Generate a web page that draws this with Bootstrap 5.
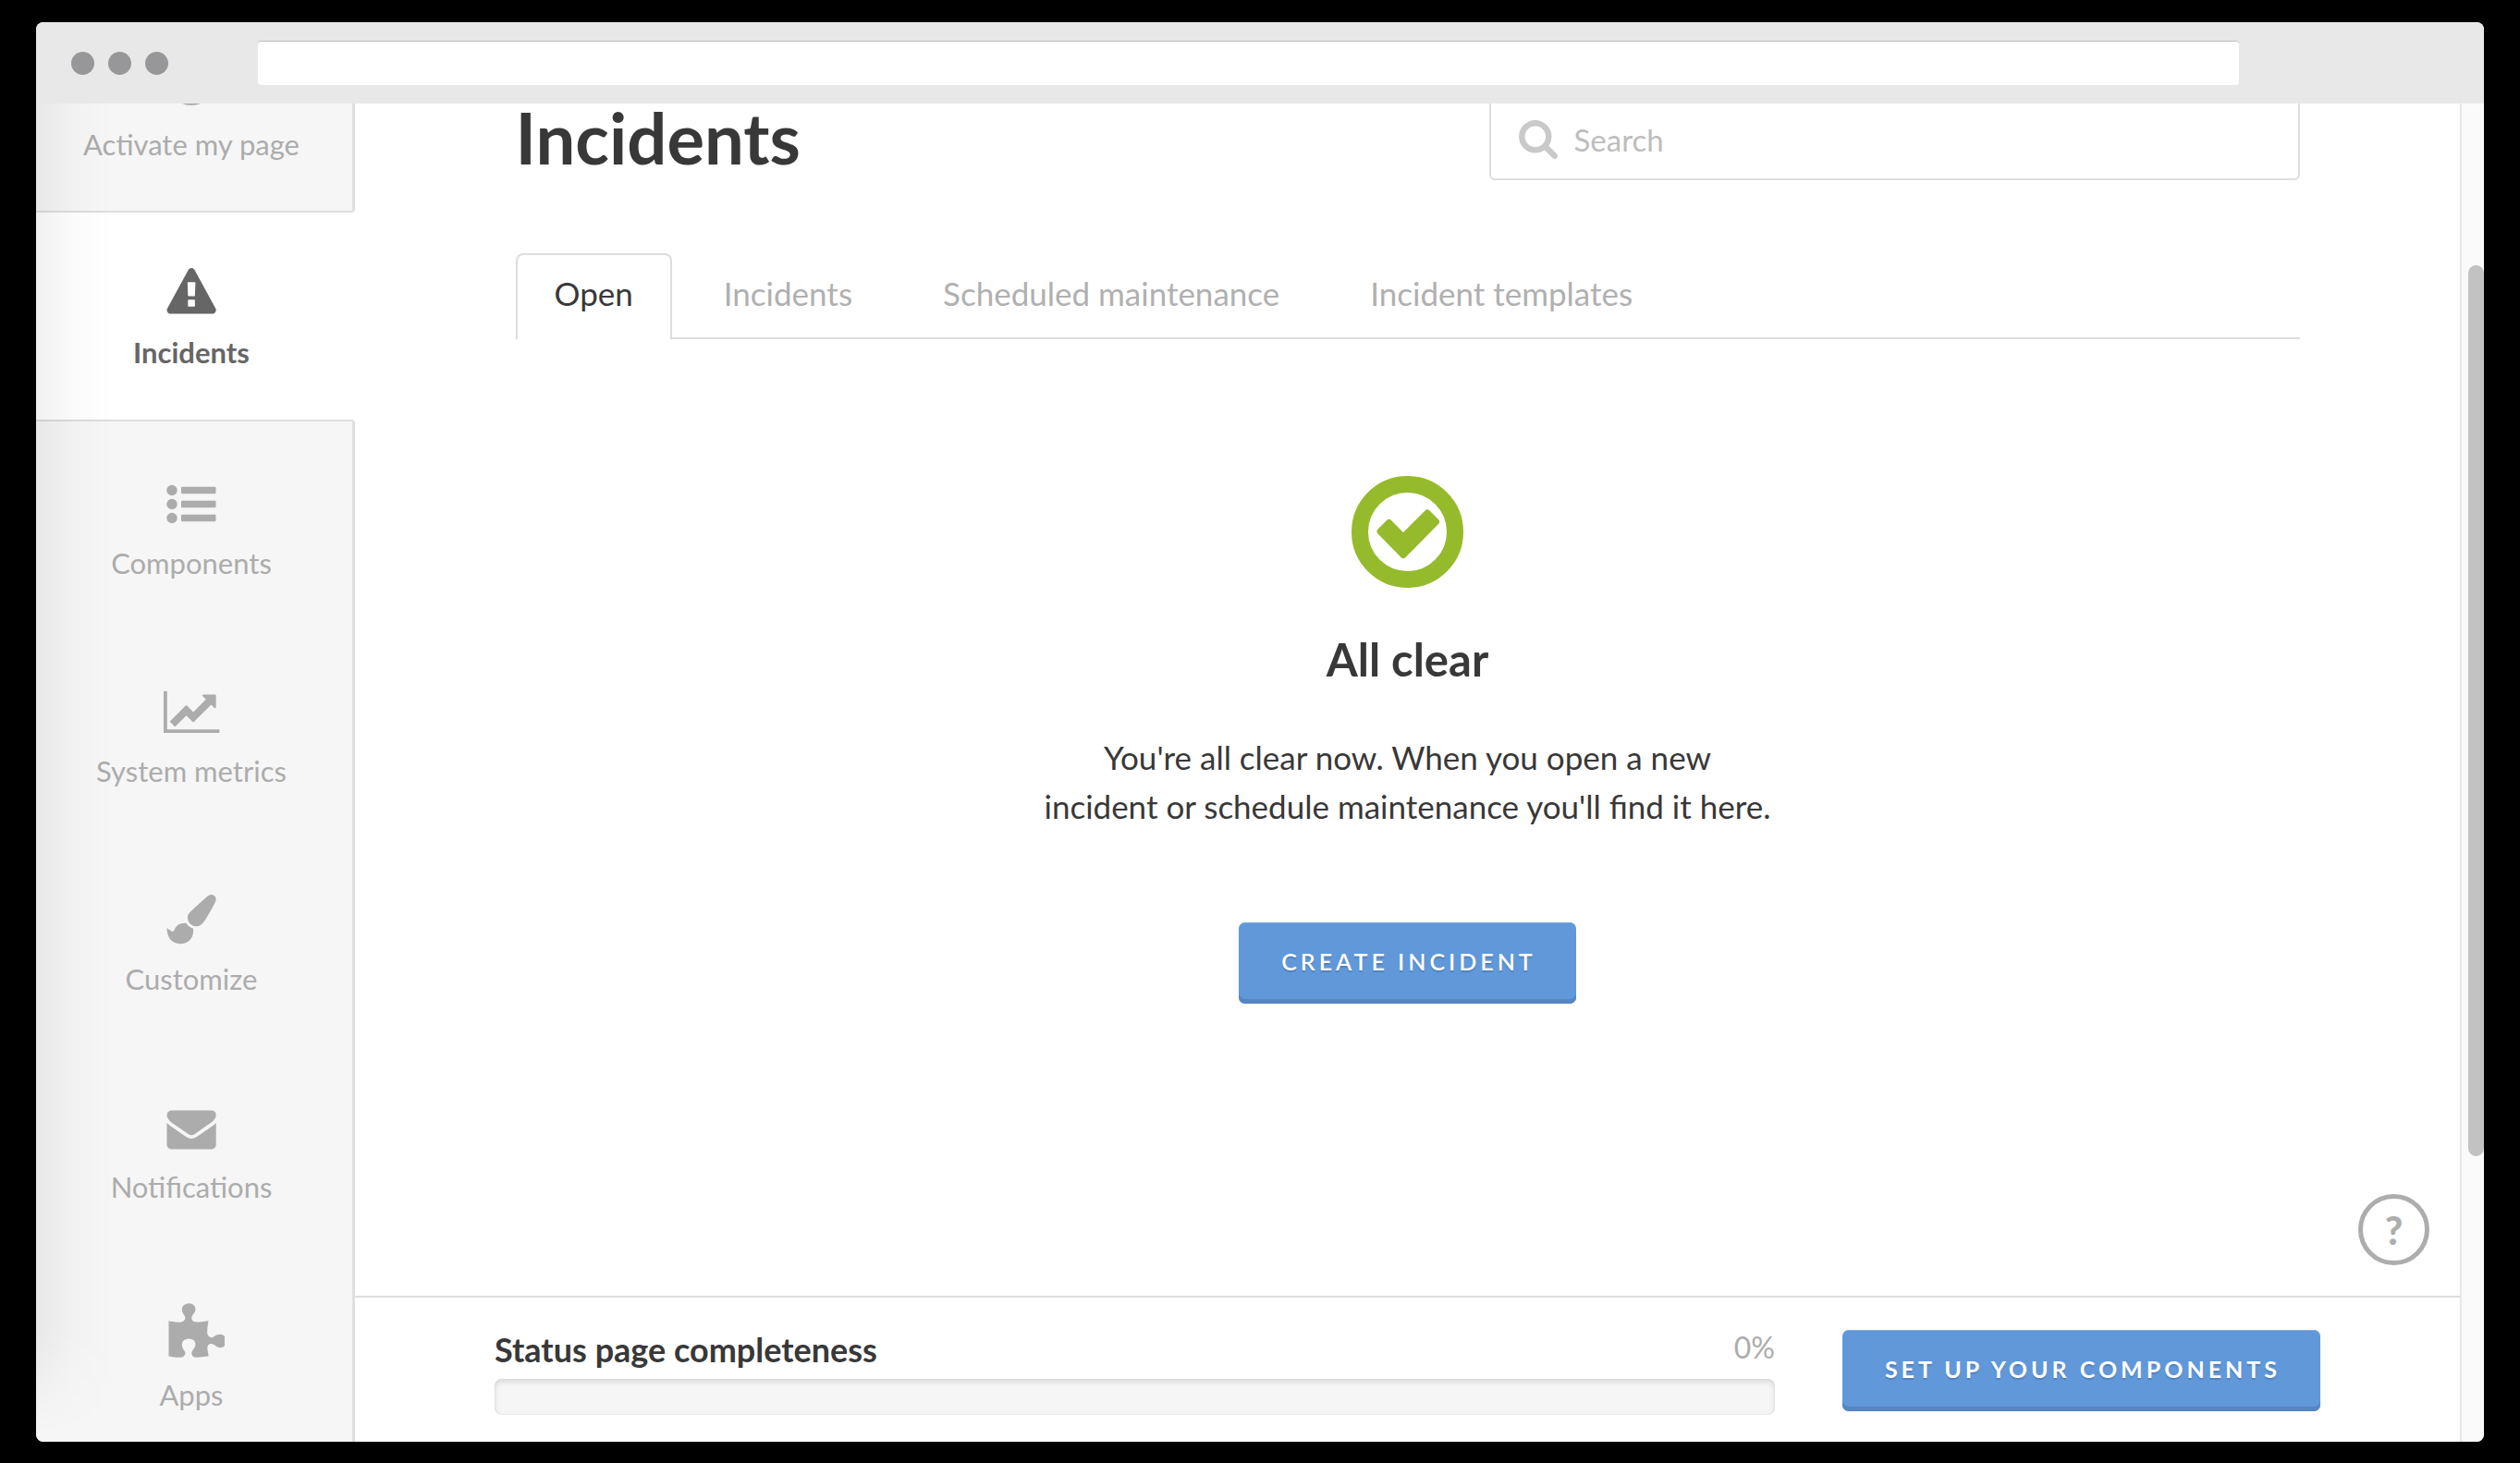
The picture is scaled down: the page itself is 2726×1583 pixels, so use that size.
<!DOCTYPE html>
<html lang="en">
<head>
<meta charset="utf-8">
<meta name="viewport" content="width=device-width, initial-scale=1">
<title>Incidents</title>
<link href="https://cdn.jsdelivr.net/npm/bootstrap@5.3.0/dist/css/bootstrap.min.css" rel="stylesheet">
<style>
body{background:#000;color:#383838;font-family:Lato,"Open Sans",sans-serif;font-size:35px;line-height:52px}
.shell{height:100vh;padding:24px 39px 23px}
.window{background:#fff;border-radius:8px}
.titlebar{background:#e8e8e8;height:88px;padding-left:38px;padding-right:265px}
.dots{gap:15px;margin-right:97px}
.dot{width:25px;height:25px;background:#979799}
.address{height:48px;border:0;border-top:1px solid #bdbdbd;border-radius:4px;background:#fff;padding:0 16px;font-size:24px;outline-offset:-2px}
.sidebar{width:345px;background:#f6f6f6;min-height:0}
.sidebar::after{content:"";position:absolute;top:0;bottom:0;left:0;width:84px;pointer-events:none;background:linear-gradient(to right,rgba(0,0,0,.055),rgba(0,0,0,.015) 50%,rgba(0,0,0,0));-webkit-mask-image:linear-gradient(to top,transparent 10px,#000 120px);mask-image:linear-gradient(to top,transparent 10px,#000 120px)}
.side-nav{margin-top:-109px}
.side-link{height:225px;padding:47px 6px 0 0;border-right:3px solid #e0e0e0;color:#acacac;font-size:31px;line-height:36px;gap:10px;text-decoration:none}
.side-link:hover{color:#888}
.side-link svg{width:72px;height:78px;flex:none}
.side-link.current{height:228px;background:#fff;border-right-color:#fff;border-top:2px solid #ddd;border-bottom:2px solid #ddd;padding-top:45px;color:#666;font-weight:700}
.scrolled{margin-top:-5px}
.content-width{max-width:1930px}
.page-title{font-size:76px;line-height:72px;font-weight:700}
.search-box{width:877px;height:88px;border:2px solid #ddd;border-radius:6px;padding:0 32px 0 30px;gap:18px;color:#c9c9c9}
.search-box svg{width:42px;height:42px;flex:none}
.search-box input{border:0;font-size:33px;background:none;outline:0;padding:0;color:#383838}
.search-box input::placeholder{color:#bdbdbd;opacity:1}
.page-tabs{margin-top:79px;gap:14px;border-bottom:2px solid #ddd}
.page-tabs .nav-link{border:2px solid transparent;border-bottom:0;border-radius:8px 8px 0 0;padding:16px 40px 25px;line-height:50px;color:#b0b0b0;margin-bottom:-2px}
.page-tabs .nav-link.active{border-color:#ddd;color:#383838;background:#fff}
.empty-state{padding-top:148px}
.empty-state svg{width:121px;height:121px}
.empty-title{font-size:49px;line-height:58px;font-weight:700;margin:48px 0 51px}
.empty-text{line-height:53px;margin-bottom:99px}
.btn-action{--bs-btn-color:#fff;--bs-btn-bg:#6098d9;--bs-btn-hover-color:#fff;--bs-btn-hover-bg:#5790d3;--bs-btn-active-color:#fff;--bs-btn-active-bg:#5585c2;--bs-btn-border-width:0;height:88px;padding:0 43px 4px 46px;border-radius:7px;box-shadow:inset 0 -5px 0 #5585c2,inset 0 1px 0 #7fade2;font-size:25px;line-height:40px;font-weight:600;letter-spacing:4px;text-shadow:0 2px 1px rgba(0,0,0,.15);text-transform:uppercase}
.help{right:33px;bottom:33px;width:77px;height:77px;border:5px solid #adadad;background:#fff;color:#adadad;font-size:42px;line-height:60px;font-weight:900}
.setup-bar{height:158px;border-top:2px solid #ddd}
.setup-width{max-width:1975px;gap:73px;padding-top:2px}
.setup-label{font-size:36px;font-weight:700;line-height:48px}
.setup-value{color:#acacac;font-size:32px;line-height:44px}
.meter{--bs-progress-height:39px;--bs-progress-bg:#f6f6f6;--bs-progress-border-radius:8px;box-shadow:inset 0 3px 6px rgba(0,0,0,.12),inset 0 0 2px rgba(0,0,0,.1);margin-top:8px}
.track{width:26px;background:#fafafa;border-left:2px solid #e8e8e8;padding-top:175px}
.thumb{width:17px;height:75.7%;border-radius:9px;background:#c2c2c2}
</style>
</head>
<body>
<div class="shell d-flex">
<div class="window d-flex flex-column flex-grow-1 overflow-hidden">
  <header class="titlebar d-flex align-items-center flex-shrink-0">
    <div class="dots d-flex"><span class="dot rounded-circle"></span><span class="dot rounded-circle"></span><span class="dot rounded-circle"></span></div>
    <input class="address flex-grow-1" type="text" aria-label="Address">
  </header>
  <div class="d-flex flex-grow-1 overflow-hidden">
    <aside class="sidebar position-relative flex-shrink-0 overflow-hidden">
      <nav class="side-nav d-flex flex-column" aria-label="Main">
        <a href="#" class="side-link d-flex flex-column align-items-center">
          <svg viewBox="0 0 72 78"><circle cx="36" cy="38" r="22" fill="none" stroke="currentColor" stroke-width="8"/></svg>
          <span>Activate my page</span></a>
        <a href="#" class="side-link current d-flex flex-column align-items-center" aria-current="page">
          <svg viewBox="0 0 72 78" fill="currentColor"><g transform="translate(9.5 15) scale(.0297)"><path d="M1024 1375v-190q0-14-9.500-23.500t-22.500-9.500h-192q-13 0-22.500 9.500t-9.500 23.500v190q0 14 9.500 23.500t22.500 9.500h192q13 0 22.500-9.500t9.500-23.500zm-2-374l18-459q0-12-10-19-13-11-24-11h-220q-11 0-24 11-10 7-10 21l17 457q0 10 10 16.500t24 6.500h185q14 0 23.500-6.500t10.500-16.500zm-14-934l768 1408q35 63-2 126-17 29-46.500 46t-63.500 17h-1536q-34 0-63.500-17t-46.500-46q-37-63-2-126l768-1408q17-31 47-49t65-18 65 18 47 49z"/></g></svg>
          <span>Incidents</span></a>
        <a href="#" class="side-link d-flex flex-column align-items-center">
          <svg viewBox="0 0 72 78" fill="currentColor"><circle cx="15" cy="27.500" r="5.700"/><circle cx="15" cy="42.500" r="5.700"/><circle cx="15" cy="57.500" r="5.700"/><rect x="25" y="23.700" width="37.500" height="7.600" rx="1"/><rect x="25" y="38.700" width="37.500" height="7.600" rx="1"/><rect x="25" y="53.700" width="37.500" height="7.600" rx="1"/></svg>
          <span>Components</span></a>
        <a href="#" class="side-link d-flex flex-column align-items-center">
          <svg viewBox="0 0 72 78" fill="currentColor"><g transform="translate(6 16) scale(.0295)"><path d="M2048 1536v128h-2048v-1536h128v1408h1920zm-128-1248v435q0 21-19.500 29.500t-35.500-7.500l-121-121-633 633q-10 10-23 10t-23-10l-233-233-416 416-192-192 585-585q10-10 23-10t23 10l233 233 464-464-121-121q-16-16-7.500-35.500t29.500-19.500h435q14 0 23 9t9 23z"/></g></svg>
          <span>System metrics</span></a>
        <a href="#" class="side-link d-flex flex-column align-items-center">
          <svg viewBox="0 0 72 78" fill="currentColor"><g transform="translate(9.500 15) scale(.0297)"><path d="M1615 0q70 0 122.500 46.500t52.500 116.500q0 63-45 151-332 629-465 752-97 91-218 91-126 0-216.500-92.500t-90.500-219.500q0-128 92-212l638-579q59-54 130-54zm-909 1034q39 76 106.500 130t150.500 76l1 71q4 213-129.500 347t-348.500 134q-123 0-218-46.500t-152.500-127.500-86.500-183-29-220q7 5 41 30t62 44.500 59 36.500 46 17q41 0 55-37 25-66 57.500-112.500t69.500-76 88-47.500 103-25.500 125-10.500z"/></g></svg>
          <span>Customize</span></a>
        <a href="#" class="side-link d-flex flex-column align-items-center">
          <svg viewBox="0 0 72 78" fill="currentColor"><g transform="translate(9.500 16) scale(.0297)"><path d="M1792 710v794q0 66-47 113t-113 47h-1472q-66 0-113-47t-47-113v-794q44 49 101 87 362 246 497 345 57 42 92.500 65.500t94.500 48 110 24.500h2q51 0 110-24.500t94.500-48 92.500-65.500q170-123 498-345 57-39 100-87zm0-294q0 79-49 151t-122 123q-376 261-468 325-10 7-42.500 31t-54 38.500-52 32.500-57.500 27-50 9h-2q-23 0-50-9t-57.500-27-52-32.500-54-38.500-42.500-31q-91-64-262-182.500t-205-142.500q-62-42-117-115.500t-55-136.500q0-78 41.500-130t118.500-52h1472q65 0 112.500 47t47.500 113z"/></g></svg>
          <span>Notifications</span></a>
        <a href="#" class="side-link d-flex flex-column align-items-center">
          <svg viewBox="0 0 72 78" fill="currentColor"><g transform="translate(11.500 12) scale(.0373)"><path d="M1664 970q0 81-44.500 135t-123.500 54q-41 0-77.500-17.500t-59-38-56.500-38-71-17.500q-110 0-110 124 0 39 16 115t15 115v5q-22 0-33 1-34 3-97.500 11.500t-115.500 13.500-98 5q-61 0-103-26.500t-42-83.500q0-37 17.500-71t38-56.500 38-59 17.500-77.500q0-79-54-123.500t-135-44.500q-84 0-143 45.500t-59 127.500q0 43 15 83t33.500 64.500 33.500 53 15 50.500q0 45-46 89-37 35-117 35-95 0-245-24-9-2-27.500-4t-27.500-4l-13-2q-1 0-3-1-2 0-2-1v-1024q2 1 17.500 3.500t34 5 21.500 3.500q150 24 245 24 80 0 117-35 46-44 46-89 0-22-15-50.500t-33.500-53-33.500-64.500-15-83q0-82 59-127.500t144-45.500q80 0 134 44.500t54 123.500q0 41-17.500 77.500t-38 59-38 56.500-17.500 71q0 57 42 83.500t103 26.500q64 0 180-15t163-17v2q-1 2-3.500 17.500t-5 34-3.500 21.500q-24 150-24 245 0 80 35 117 44 46 89 46 22 0 50.500-15t53-33.500 64.500-33.500 83-15q82 0 127.500 59t45.500 143z"/></g></svg>
          <span>Apps</span></a>
      </nav>
    </aside>
    <div class="position-relative d-flex flex-column flex-grow-1 overflow-hidden">
      <main class="scrolled flex-grow-1 position-relative">
        <div class="content-width mx-auto">
          <div class="d-flex justify-content-between align-items-center">
            <h1 class="page-title mb-0 pb-1">Incidents</h1>
            <label class="search-box d-flex align-items-center">
              <svg viewBox="64 128 1664 1664" fill="currentColor" aria-hidden="true"><path d="M1216 832q0-185-131.500-316.500t-316.500-131.500-316.500 131.500-131.500 316.500 131.500 316.500 316.500 131.500 316.500-131.500 131.500-316.500zm512 832q0 52-38 90t-90 38q-54 0-90-38l-343-342q-179 124-399 124-143 0-273.500-55.500t-225-150-150-225-55.500-273.500 55.500-273.500 150-225 225-150 273.500-55.500 273.500 55.500 225 150 150 225 55.500 273.500q0 220-124 399l343 343q37 37 37 90z"/></svg>
              <input class="flex-grow-1" type="search" placeholder="Search" aria-label="Search">
            </label>
          </div>
          <ul class="page-tabs nav">
            <li class="nav-item"><a class="nav-link active" href="#" aria-current="true">Open</a></li>
            <li class="nav-item"><a class="nav-link" href="#">Incidents</a></li>
            <li class="nav-item"><a class="nav-link" href="#">Scheduled maintenance</a></li>
            <li class="nav-item"><a class="nav-link" href="#">Incident templates</a></li>
          </ul>
          <section class="empty-state d-flex flex-column align-items-center text-center">
            <svg viewBox="0 0 121 121" aria-hidden="true"><circle cx="60.500" cy="60.500" r="51.500" fill="none" stroke="#95ba2c" stroke-width="18"/><path d="M31 60l9.500-9.500L56 66l26-26 9.500 9.500L56 85.500z" fill="#95ba2c" stroke="#95ba2c" stroke-width="7" stroke-linejoin="round"/></svg>
            <h2 class="empty-title">All clear</h2>
            <p class="empty-text">You're all clear now. When you open a new<br>incident or schedule maintenance you'll find it here.</p>
            <button type="button" class="btn btn-action">Create incident</button>
          </section>
        </div>
        <button type="button" class="help btn position-absolute rounded-circle p-0" aria-label="Help">?</button>
      </main>
      <footer class="setup-bar bg-white flex-shrink-0">
        <div class="setup-width mx-auto h-100 d-flex align-items-center">
          <div class="flex-grow-1">
            <div class="d-flex justify-content-between">
              <span class="setup-label" id="setup-label">Status page completeness</span>
              <span class="setup-value">0%</span>
            </div>
            <div class="meter progress" role="progressbar" aria-labelledby="setup-label" aria-valuenow="0" aria-valuemin="0" aria-valuemax="100"><div class="progress-bar" style="width:0%"></div></div>
          </div>
          <button type="button" class="btn btn-action fw-bold">Set up your components</button>
        </div>
      </footer>
    </div>
    <div class="track d-flex justify-content-end flex-shrink-0"><div class="thumb"></div></div>
  </div>
</div>
</div>
<script src="https://cdn.jsdelivr.net/npm/bootstrap@5.3.0/dist/js/bootstrap.bundle.min.js"></script>
</body>
</html>
